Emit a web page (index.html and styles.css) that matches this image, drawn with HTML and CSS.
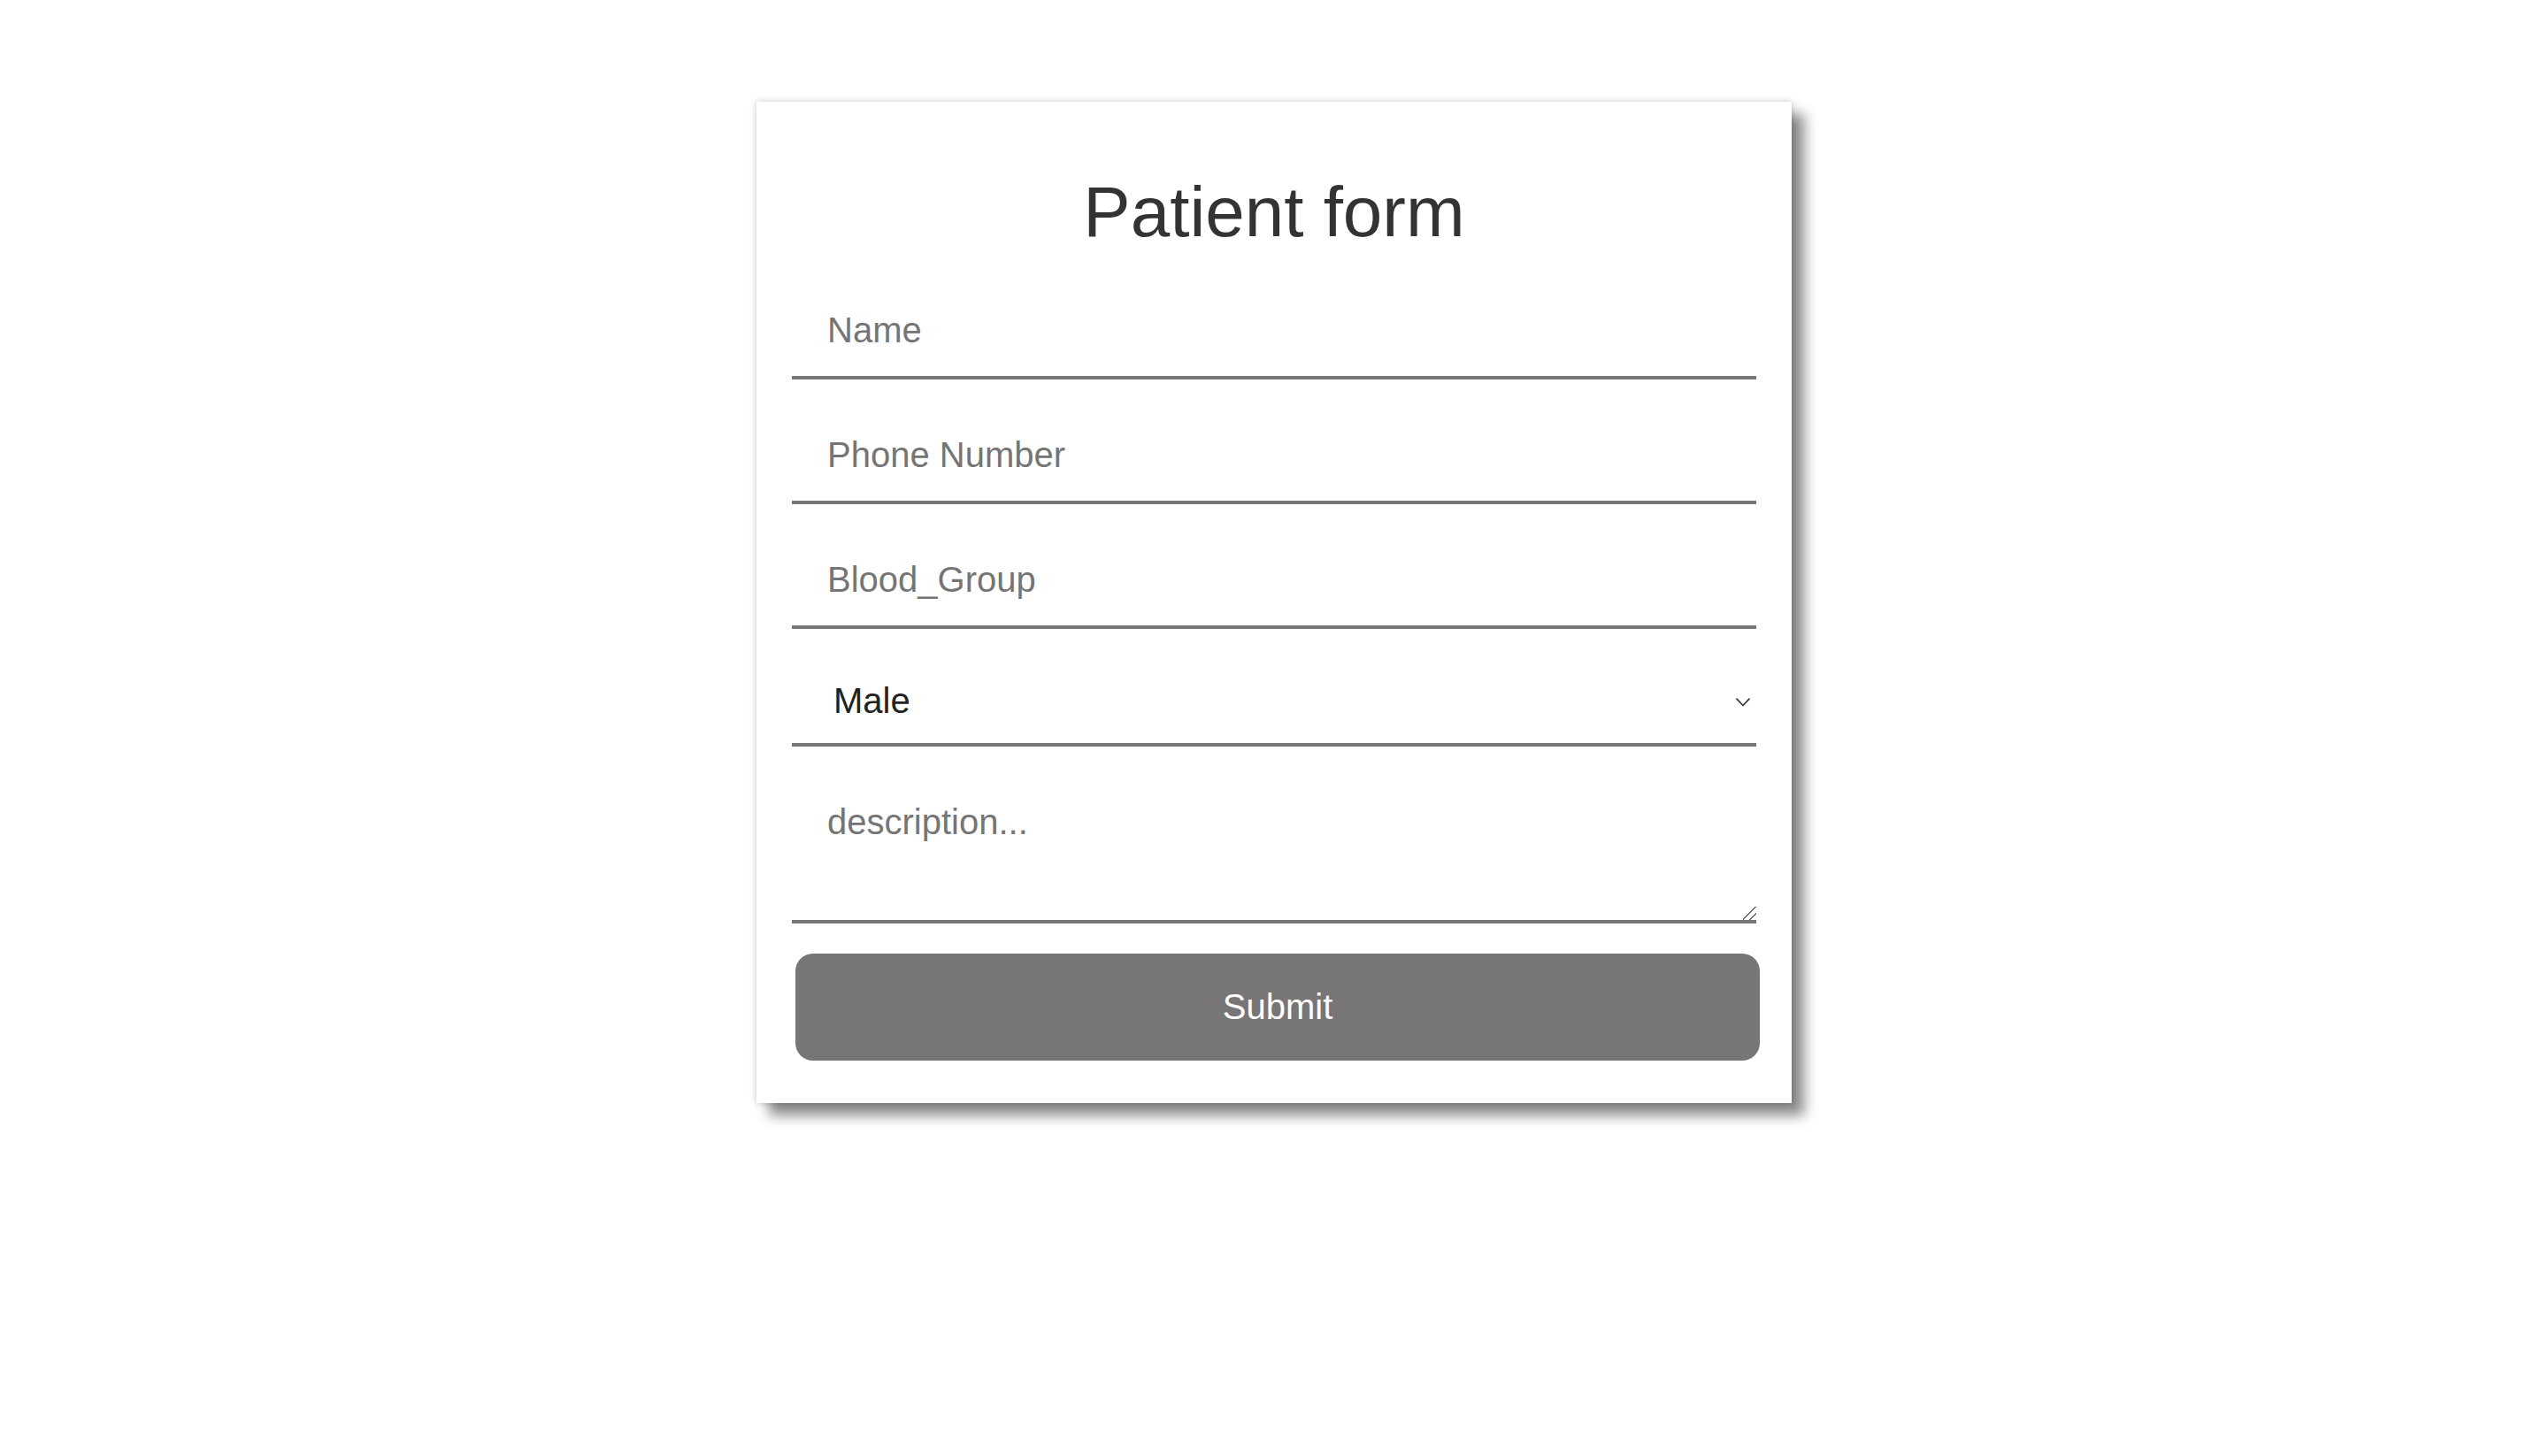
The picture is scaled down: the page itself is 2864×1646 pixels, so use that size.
FILE: index.html
```html
<!DOCTYPE html>
<html lang="en">
<head>
<meta charset="utf-8">
<title>Patient form</title>
<link rel="stylesheet" href="styles.css">
</head>
<body>
<div class="page">
  <form class="card">
    <h1 class="title">Patient form</h1>
    <div class="fields">
      <input class="field" type="text" placeholder="Name">
      <input class="field" type="text" placeholder="Phone Number">
      <input class="field" type="text" placeholder="Blood_Group">
      <div class="select-wrap">
        <select class="select">
          <option>Male</option>
          <option>Female</option>
        </select>
        <svg class="chevron" viewBox="0 0 16 10" width="16" height="10" aria-hidden="true">
          <polyline points="1,1.2 8,8.5 15,1.2" fill="none" stroke="#3a3a3a" stroke-width="1.8" stroke-linecap="round" stroke-linejoin="round"/>
        </svg>
      </div>
      <textarea class="field area" placeholder="description..."></textarea>
      <button class="submit" type="button">Submit</button>
    </div>
  </form>
</div>
</body>
</html>
```

FILE: styles.css
```css
html, body {
  margin: 0;
  padding: 0;
  background: #ffffff;
}

.page {
  box-sizing: border-box;
  min-height: 100vh;
  display: flex;
  justify-content: center;
  align-items: flex-start;
  padding: 115px 0 0 16px;
  font-family: "Liberation Sans", Arial, Helvetica, sans-serif;
}

.card {
  box-sizing: border-box;
  width: 1170px;
  padding: 40px 40px 48px;
  background: #ffffff;
  box-shadow: 0 0 7px rgba(0, 0, 0, 0.22), 14px 14px 14px #8a8a8a;
}

.title {
  margin: 39px 0 35px;
  font-size: 80px;
  line-height: 92px;
  font-weight: normal;
  color: #333333;
  text-align: center;
}

.fields {
  display: flex;
  flex-direction: column;
  gap: 33px;
}

.field {
  box-sizing: border-box;
  display: block;
  width: 100%;
  height: 108px;
  margin: 0;
  padding: 29px 40px;
  border: none;
  border-bottom: 4px solid #777777;
  background: transparent;
  font-family: "Liberation Sans", Arial, Helvetica, sans-serif;
  font-size: 40px;
  line-height: 46px;
  color: #222222;
  outline: none;
}

.field::placeholder {
  color: #757575;
  opacity: 1;
}

.area {
  height: 167px;
}

.area::-webkit-resizer {
  background: linear-gradient(135deg,
    transparent 0 45%,
    #6a6a6a 45% 53%,
    transparent 53% 71%,
    #6a6a6a 71% 79%,
    transparent 79%);
}

.select-wrap {
  position: relative;
}

.select {
  box-sizing: border-box;
  display: block;
  width: 100%;
  height: 100px;
  margin: 0;
  padding: 25px 60px 25px 47px;
  border: none;
  border-bottom: 4px solid #777777;
  border-radius: 0;
  background: transparent;
  -webkit-appearance: none;
  appearance: none;
  font-family: "Liberation Sans", Arial, Helvetica, sans-serif;
  font-size: 40px;
  line-height: 46px;
  color: #222222;
  outline: none;
}

.chevron {
  position: absolute;
  right: 7px;
  top: 45px;
  pointer-events: none;
}

.submit {
  box-sizing: border-box;
  width: 100%;
  height: 121px;
  margin: 1px 0 0 4px;
  padding: 0;
  border: none;
  border-radius: 20px;
  background: #777576;
  color: #ffffff;
  font-family: "Liberation Sans", Arial, Helvetica, sans-serif;
  font-size: 40px;
  cursor: pointer;
}
```
